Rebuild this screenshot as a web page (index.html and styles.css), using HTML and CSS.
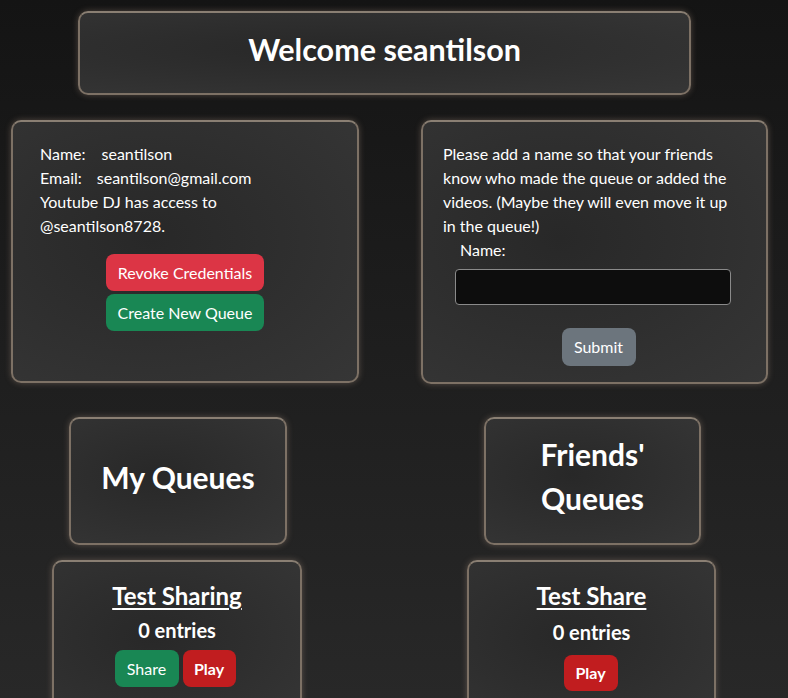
FILE: index.html
```html
<!DOCTYPE html>
<html lang="en">
<head>
<meta charset="utf-8">
<title>Youtube DJ</title>
<link rel="stylesheet" href="styles.css">
</head>
<body>
<div class="page">
  <header class="card welcome">
    <h1 class="welcome-title">Welcome seantilson</h1>
  </header>
  <main class="grid">
    <section class="card account">
      <div class="account-info">
        <div class="info-line"><span class="label">Name:</span><span class="value name-value">seantilson</span></div>
        <div class="info-line"><span class="label">Email:</span><span class="value email-value">seantilson@gmail.com</span></div>
        <div class="info-line">Youtube DJ has access to<br>@seantilson8728.</div>
      </div>
      <div class="account-actions">
        <button class="btn btn-danger btn-wide">Revoke Credentials</button>
        <button class="btn btn-success btn-wide">Create New Queue</button>
      </div>
    </section>
    <section class="card name-form">
      <p class="form-text">Please add a name so that your friends<br>know who made the queue or added the<br>videos. (Maybe they will even move it up<br>in the queue!)</p>
      <label class="form-label" for="name">Name:</label>
      <input class="form-input" id="name" type="text">
      <div class="form-actions">
        <button class="btn btn-secondary">Submit</button>
      </div>
    </section>
    <div class="card heading heading-mine">My Queues</div>
    <div class="card heading heading-friends">Friends'<br>Queues</div>
    <div class="card queue queue-mine">
      <a class="queue-title" href="#">Test Sharing</a>
      <div class="queue-count">0 entries</div>
      <div class="queue-actions">
        <button class="btn btn-success btn-small">Share</button>
        <button class="btn btn-play btn-small">Play</button>
      </div>
    </div>
    <div class="card queue queue-friends">
      <a class="queue-title" href="#">Test Share</a>
      <div class="queue-count">0 entries</div>
      <div class="queue-actions">
        <button class="btn btn-play btn-small">Play</button>
      </div>
    </div>
  </main>
</div>
</body>
</html>
```
FILE: styles.css
```css
* { box-sizing: border-box; }
html, body { margin: 0; height: 100%; }
body {
  background: linear-gradient(to bottom, #141414 0%, #1e1e1e 50%, #282828 100%);
  color: #ffffff;
  font-family: Lato, "Noto Sans", sans-serif;
  font-size: 16px;
  line-height: 24px;
  overflow: hidden;
}
.page { padding-top: 11px; }

.card {
  border: 2px solid #7d7165;
  border-top-color: #8a7f73;
  border-radius: 10px;
  background: radial-gradient(ellipse at 40% 45%, #282828 0%, #2e2e2e 45%, #363636 100%);
  box-shadow: 0 0 6px rgba(190, 160, 140, 0.35);
}

.welcome {
  margin-left: 78px;
  width: 613px;
  height: 84px;
  display: flex;
  align-items: center;
  justify-content: center;
  padding-bottom: 9px;
}
.welcome-title {
  margin: 0;
  font-size: 30.5px;
  font-weight: 700;
  line-height: 38px;
}

.grid {
  display: grid;
  grid-template-columns: 410px 378px;
  align-items: start;
  margin-top: 25px;
}

.account {
  margin-left: 11px;
  width: 348px;
  height: 263px;
  padding: 20px 0 0 27px;
}
.label { display: inline-block; }
.name-value { margin-left: 16px; }
.email-value { margin-left: 15px; }
.account-actions {
  display: flex;
  flex-direction: column;
  align-items: center;
  gap: 3px;
  margin-top: 16px;
  padding-right: 27px;
}

.btn {
  font-family: Lato, "Noto Sans", sans-serif;
  font-size: 16px;
  line-height: 24px;
  color: #ffffff;
  border: 1px solid transparent;
  border-radius: 8px;
  padding: 6px 12px;
  cursor: pointer;
}
.btn-wide { width: 158px; height: 37px; padding: 0; }
.btn-danger { background: #dc3545; }
.btn-success { background: #198754; }
.btn-secondary { background: #6c757d; }
.btn-play { background: #c11d1f; font-weight: 700; }

.name-form {
  width: 347px;
  height: 264px;
  margin-left: 11px;
  padding: 20px 0 0 20px;
}
.form-text { margin: 0; }
.form-label { display: block; margin-left: 17px; }
.form-input {
  display: block;
  margin: 7px 0 0 12px;
  width: 276px;
  height: 36px;
  background: #0d0d0d;
  border: 1px solid #8a8a8a;
  border-radius: 4px;
  color: #fff;
}
.form-actions {
  display: flex;
  justify-content: center;
  margin-top: 23px;
  padding-left: 8px;
  padding-right: 20px;
}
.form-actions .btn { width: 74px; height: 38px; padding: 0; }

.heading {
  margin-top: 33px;
  height: 128px;
  display: flex;
  align-items: center;
  justify-content: center;
  text-align: center;
  font-size: 30px;
  font-weight: 700;
  line-height: 44px;
  padding-bottom: 9px;
}
.heading-mine { margin-left: 69px; width: 218px; }
.heading-friends { margin-left: 74px; width: 217px; padding-bottom: 11px; }

.queue {
  margin-top: 15px;
  height: 170px;
  display: flex;
  flex-direction: column;
  align-items: center;
  padding-top: 19px;
}
.queue-mine { margin-left: 52px; width: 250px; }
.queue-friends { margin-left: 57px; width: 249px; }
.queue-title {
  color: #ffffff;
  font-size: 24px;
  font-weight: 700;
  line-height: 30px;
  text-decoration: underline;
  text-underline-offset: 3px;
}
.queue-count {
  font-size: 20px;
  font-weight: 700;
  line-height: 28px;
  margin-top: 5px;
}
.queue-actions {
  display: flex;
  gap: 4px;
  margin-top: 6px;
}
.btn-small { height: 37px; padding: 0 12px; }
.queue-mine .queue-actions { margin-right: 4px; }
.queue-friends .queue-count { margin-top: 7px; }
.queue-friends .queue-actions { margin-top: 9px; margin-right: 2px; }
.queue-friends .btn-small { height: 36px; width: 54px; padding: 0; }
.queue-mine .btn-success { width: 64px; padding: 0; }
.queue-mine .btn-play { width: 53px; padding: 0; }
```
